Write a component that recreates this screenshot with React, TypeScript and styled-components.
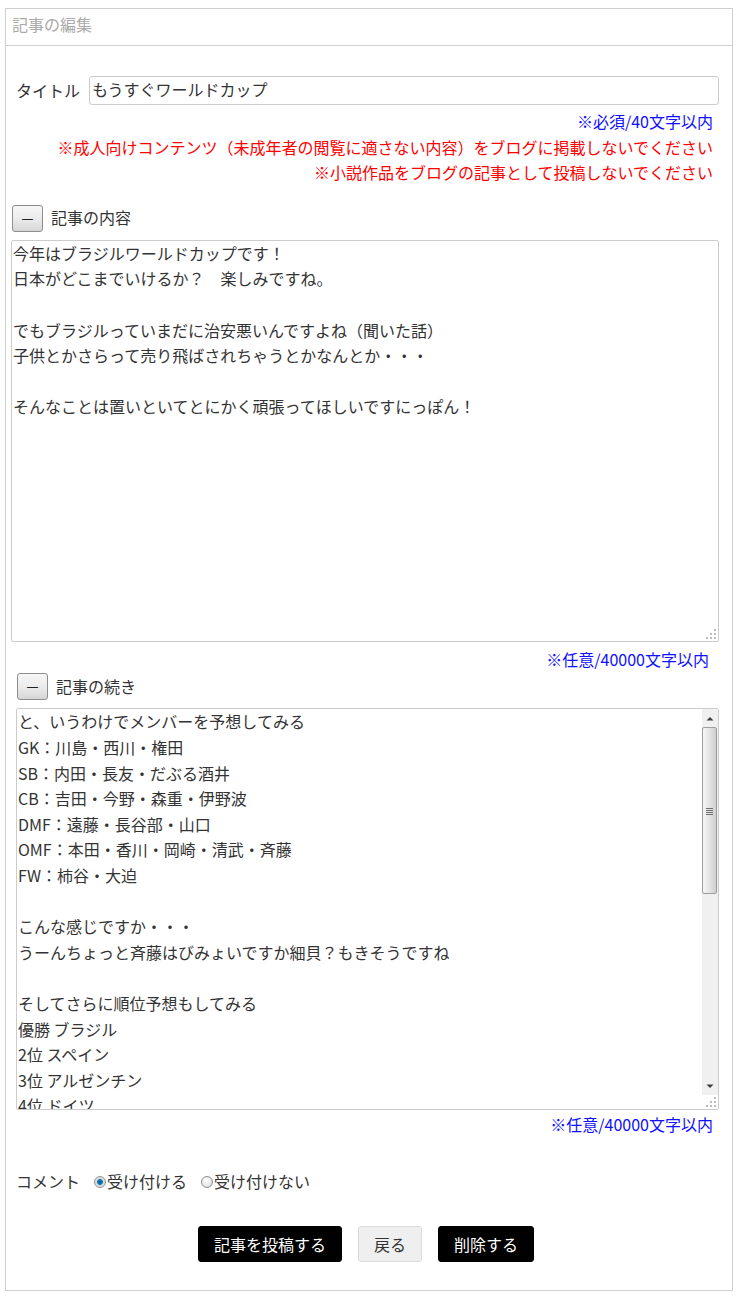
import React from "react";
import styled, { createGlobalStyle } from "styled-components";

const FONT = `"Noto Sans CJK JP", "Noto Sans", sans-serif`;

const Global = createGlobalStyle`
  html, body { margin: 0; padding: 0; background: #fff; }
  body { font-family: ${FONT}; color: #333; }
  * { box-sizing: border-box; }
`;

const dots = `url("data:image/svg+xml;utf8,<svg xmlns='http://www.w3.org/2000/svg' width='14' height='14'><g fill='%23bdbdbd'><rect x='10' y='2' width='2' height='2'/><rect x='6' y='6' width='2' height='2'/><rect x='10' y='6' width='2' height='2'/><rect x='2' y='10' width='2' height='2'/><rect x='6' y='10' width='2' height='2'/><rect x='10' y='10' width='2' height='2'/></g></svg>")`;

const Panel = styled.div`
  margin: 8px 13px 8px 5px;
  border: 1px solid #cfcfcf;
  background: #fff;
`;

const PanelHeader = styled.div`
  height: 37px;
  padding: 3px 0 0 6px;
  border-bottom: 1px solid #cfcfcf;
  color: #aaa;
  font-size: 16px;
  line-height: 24px;
`;

const PanelBody = styled.div`
  padding: 30px 0 28px 0;
  display: flex;
  flex-direction: column;
`;

const TitleRow = styled.div`
  display: flex;
  align-items: center;
  padding: 0 13px 0 10px;
  gap: 9px;
`;

const Label = styled.span`
  font-size: 16px;
  line-height: 25.6px;
  color: #333;
  white-space: nowrap;
`;

const TextInput = styled.input`
  flex: 1;
  height: 29px;
  border: 1px solid #ccc;
  border-radius: 3px;
  padding: 0 2px 3px;
  font-family: ${FONT};
  font-size: 16px;
  color: #333;
  outline: none;
`;

const Note = styled.div<{ $color: string; $right: number; $mt?: number }>`
  text-align: right;
  color: ${(p) => p.$color};
  font-size: 16px;
  line-height: 25.6px;
  padding-right: ${(p) => p.$right}px;
  margin-top: ${(p) => p.$mt ?? 0}px;
  white-space: nowrap;
`;

const ToggleRow = styled.div<{ $left: number; $mt: number }>`
  display: flex;
  align-items: center;
  gap: 8px;
  padding-left: ${(p) => p.$left}px;
  margin-top: ${(p) => p.$mt}px;
`;

const ToggleButton = styled.button`
  width: 31px;
  height: 27px;
  padding: 0;
  border: 1px solid #8e8e8e;
  border-radius: 3px;
  background: linear-gradient(to bottom, #f6f6f6 0%, #ececec 50%, #d6d6d6 100%);
  font-family: ${FONT};
  font-size: 15px;
  color: #222;
  line-height: 25px;
  cursor: pointer;
`;

const AreaWrap = styled.div<{ $left: number; $mt: number }>`
  position: relative;
  margin: ${(p) => p.$mt}px 13px 0 ${(p) => p.$left}px;
`;

const Area = styled.textarea<{ $scroll?: boolean }>`
  display: block;
  width: 100%;
  height: 402px;
  border: 1px solid #ccc;
  border-radius: 2px;
  padding: 0 ${(p) => (p.$scroll ? 18 : 1)}px 0 1px;
  font-family: ${FONT};
  font-size: 16px;
  line-height: 25.6px;
  color: #333;
  resize: vertical;
  outline: none;
  overflow-y: auto;
  scrollbar-width: none;

  &::-webkit-scrollbar {
    display: none;
  }
  &::-webkit-resizer {
    background: ${dots} right bottom no-repeat #fff;
  }
`;

const Scrollbar = styled.div`
  position: absolute;
  top: 1px;
  right: 1px;
  bottom: 15px;
  width: 16px;
  background: #f0f0f0;
  display: flex;
  flex-direction: column;
  pointer-events: none;
`;

const ScrollArrow = styled.div`
  height: 18px;
  display: flex;
  align-items: center;
  justify-content: center;
  background: #f0f0f0;
`;

const ScrollThumb = styled.div`
  height: 167px;
  margin: 0 1px 0 0;
  border: 1px solid #9d9d9d;
  border-radius: 2px;
  background: linear-gradient(to right, #f6f6f6 0%, #e4e4e4 50%, #cfcfcf 100%);
  display: flex;
  align-items: center;
  justify-content: center;
`;

const ScrollSpacer = styled.div`
  flex: 1;
`;

const Resizer = styled.div`
  position: absolute;
  right: 1px;
  bottom: 1px;
  width: 14px;
  height: 14px;
  background: ${dots} right bottom no-repeat #fff;
  pointer-events: none;
`;

const CommentRow = styled.div`
  display: flex;
  align-items: center;
  padding-left: 10px;
  margin-top: 31px;
`;

const RadioLabel = styled.label`
  display: flex;
  align-items: center;
  font-size: 16px;
  line-height: 25.6px;
  color: #333;
  margin-left: 14px;
  gap: 1px;
`;

const Radio = styled.input.attrs({ type: "radio" })`
  appearance: none;
  width: 12px;
  height: 12px;
  margin: 0;
  border-radius: 50%;
  border: 1px solid #8f8f8f;
  background: radial-gradient(circle at 40% 35%, #ffffff 0%, #d8d8d8 100%);

  &:checked {
    background: radial-gradient(circle at 50% 50%, #0b5d8c 0%, #1b7db8 38%, #cfd8df 44%, #eef2f5 100%);
  }
`;

const ButtonRow = styled.div`
  display: flex;
  justify-content: center;
  gap: 16px;
  margin-top: 31px;
  padding-right: 6px;
`;

const ActionButton = styled.button<{ $variant: "dark" | "light" }>`
  height: 36px;
  padding: 0 15px;
  border-radius: 3px;
  border: 1px solid ${(p) => (p.$variant === "dark" ? "#000" : "#dcdcdc")};
  background: ${(p) => (p.$variant === "dark" ? "#000" : "#efefef")};
  color: ${(p) => (p.$variant === "dark" ? "#fff" : "#333")};
  font-family: ${FONT};
  font-size: 16px;
  cursor: pointer;
`;

const UpIcon = () => (
  <svg width="8" height="5" viewBox="0 0 8 5">
    <path d="M0.5 4.5 L4 1 L7.5 4.5 Z" fill="#3c3c3c" />
  </svg>
);
const DownIcon = () => (
  <svg width="8" height="5" viewBox="0 0 8 5">
    <path d="M0.5 0.5 L4 4 L7.5 0.5 Z" fill="#3c3c3c" />
  </svg>
);
const GripIcon = () => (
  <svg width="7" height="8" viewBox="0 0 7 8">
    <path d="M0 1.5 H7 M0 3.5 H7 M0 5.5 H7 M0 7.5 H7" stroke="#6e6e6e" strokeWidth="1" />
  </svg>
);

const body1 = `今年はブラジルワールドカップです！
日本がどこまでいけるか？　楽しみですね。

でもブラジルっていまだに治安悪いんですよね（聞いた話）
子供とかさらって売り飛ばされちゃうとかなんとか・・・

そんなことは置いといてとにかく頑張ってほしいですにっぽん！`;

const body2 = `と、いうわけでメンバーを予想してみる
GK：川島・西川・権田
SB：内田・長友・だぶる酒井
CB：吉田・今野・森重・伊野波
DMF：遠藤・長谷部・山口
OMF：本田・香川・岡崎・清武・斉藤
FW：柿谷・大迫

こんな感じですか・・・
うーんちょっと斉藤はびみょいですか細貝？もきそうですね

そしてさらに順位予想もしてみる
優勝 ブラジル
2位 スペイン
3位 アルゼンチン
4位 ドイツ
5位 オランダ
6位 イタリア
7位 ポルトガル
8位 フランス

日本はベスト16くらいまでいってほしいですね
グループリーグはコートジボワール、ギリシャ、コロンビア
どこも強そうですがなんとか突破してほしい！

初戦は6月15日
朝の10時キックオフらしいです
みんなで応援しましょう

それではまた！`;

export default function App() {
  return (
    <>
      <Global />
      <Panel>
        <PanelHeader>記事の編集</PanelHeader>
        <PanelBody>
          <TitleRow>
            <Label>タイトル</Label>
            <TextInput defaultValue="もうすぐワールドカップ" />
          </TitleRow>
          <Note $color="#1010ff" $right={19} $mt={4}>※必須/40文字以内</Note>
          <Note $color="#ff0000" $right={19}>※成人向けコンテンツ（未成年者の閲覧に適さない内容）をブログに掲載しないでください</Note>
          <Note $color="#ff0000" $right={19}>※小説作品をブログの記事として投稿しないでください</Note>

          <ToggleRow $left={6} $mt={19}>
            <ToggleButton>－</ToggleButton>
            <Label>記事の内容</Label>
          </ToggleRow>
          <AreaWrap $left={5} $mt={8}>
            <Area defaultValue={body1} spellCheck={false} />
          </AreaWrap>
          <Note $color="#1010ff" $right={23} $mt={5}>※任意/40000文字以内</Note>

          <ToggleRow $left={11} $mt={1}>
            <ToggleButton>－</ToggleButton>
            <Label>記事の続き</Label>
          </ToggleRow>
          <AreaWrap $left={10} $mt={8}>
            <Area $scroll defaultValue={body2} spellCheck={false} />
            <Scrollbar>
              <ScrollArrow>
                <UpIcon />
              </ScrollArrow>
              <ScrollThumb>
                <GripIcon />
              </ScrollThumb>
              <ScrollSpacer />
              <ScrollArrow>
                <DownIcon />
              </ScrollArrow>
            </Scrollbar>
            <Resizer />
          </AreaWrap>
          <Note $color="#1010ff" $right={19} $mt={2}>※任意/40000文字以内</Note>

          <CommentRow>
            <Label>コメント</Label>
            <RadioLabel>
              <Radio name="comment" defaultChecked />
              受け付ける
            </RadioLabel>
            <RadioLabel>
              <Radio name="comment" />
              受け付けない
            </RadioLabel>
          </CommentRow>

          <ButtonRow>
            <ActionButton $variant="dark">記事を投稿する</ActionButton>
            <ActionButton $variant="light">戻る</ActionButton>
            <ActionButton $variant="dark">削除する</ActionButton>
          </ButtonRow>
        </PanelBody>
      </Panel>
    </>
  );
}
